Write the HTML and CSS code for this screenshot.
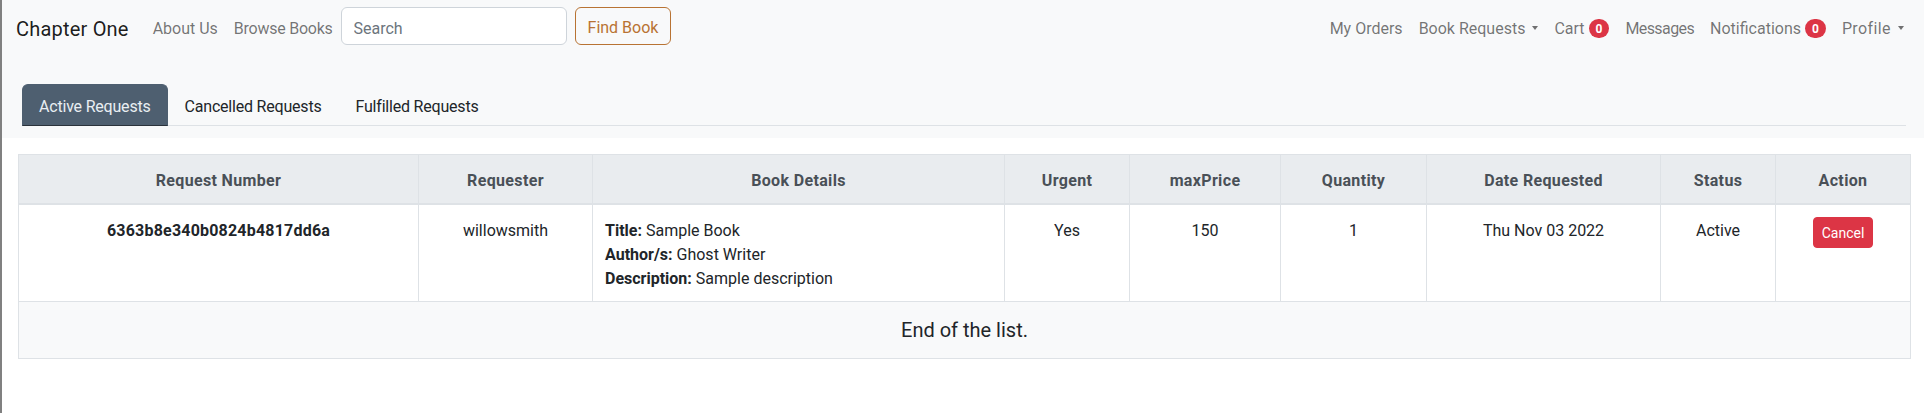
FILE: index.html
```html
<!DOCTYPE html>
<html lang="en">
<head>
<meta charset="utf-8">
<title>Chapter One - Book Requests</title>
<link rel="stylesheet" href="styles.css">
</head>
<body>
<div class="top">
  <nav class="navbar">
    <a class="brand" href="#">Chapter One</a>
    <ul class="nav-list">
      <li><a class="nav-link" href="#">About Us</a></li>
      <li><a class="nav-link tight" href="#">Browse Books</a></li>
    </ul>
    <form class="search">
      <input class="search-input" type="search" placeholder="Search">
      <button class="btn-find" type="button">Find Book</button>
    </form>
    <ul class="nav-list nav-right">
      <li><a class="nav-link" href="#">My Orders</a></li>
      <li><a class="nav-link caret" href="#">Book Requests</a></li>
      <li><a class="nav-link" href="#">Cart <span class="badge">0</span></a></li>
      <li><a class="nav-link narrow" href="#">Messages</a></li>
      <li><a class="nav-link" href="#">Notifications <span class="badge">0</span></a></li>
      <li><a class="nav-link caret wide" href="#">Profile</a></li>
    </ul>
  </nav>
  <div class="tabs-wrap">
    <ul class="tabs">
      <li><a class="tab active" href="#">Active Requests</a></li>
      <li><a class="tab" href="#">Cancelled Requests</a></li>
      <li><a class="tab" href="#">Fulfilled Requests</a></li>
    </ul>
  </div>
</div>
<div class="table-wrap">
  <table class="req-table">
    <colgroup>
      <col class="c1"><col class="c2"><col class="c3"><col class="c4"><col class="c5"><col class="c6"><col class="c7"><col class="c8"><col class="c9">
    </colgroup>
    <thead>
      <tr>
        <th>Request Number</th>
        <th>Requester</th>
        <th>Book Details</th>
        <th>Urgent</th>
        <th>maxPrice</th>
        <th>Quantity</th>
        <th>Date Requested</th>
        <th>Status</th>
        <th>Action</th>
      </tr>
    </thead>
    <tbody>
      <tr>
        <td class="req-num">6363b8e340b0824b4817dd6a</td>
        <td>willowsmith</td>
        <td class="details">
          <div><b>Title:</b> Sample Book</div>
          <div><b>Author/s:</b> Ghost Writer</div>
          <div><b>Description:</b> Sample description</div>
        </td>
        <td>Yes</td>
        <td>150</td>
        <td>1</td>
        <td>Thu Nov 03 2022</td>
        <td>Active</td>
        <td class="action"><button class="btn-cancel" type="button">Cancel</button></td>
      </tr>
      <tr>
        <td class="end" colspan="9">End of the list.</td>
      </tr>
    </tbody>
  </table>
</div>
</body>
</html>
```

FILE: styles.css
```css
html, body {
  height: 100%;
}
body {
  margin: 0;
  box-sizing: border-box;
  min-height: 100vh;
  border-left: 2px solid #808080;
  font-family: Roboto, "Liberation Sans", Arial, sans-serif;
  font-size: 16px;
  line-height: 1.5;
  color: #212529;
  background: #fff;
}
a {
  text-decoration: none;
}
ul {
  list-style: none;
  margin: 0;
  padding: 0;
}

.top {
  background: #f8f9fa;
}

.navbar {
  display: flex;
  align-items: center;
  padding: 6px 12px 8px 14px;
}
.brand {
  font-size: 20px;
  line-height: 30px;
  padding: 8px 0 2px;
  margin-right: 16px;
  letter-spacing: 0.2px;
  color: rgba(0, 0, 0, 0.9);
}
.nav-list {
  display: flex;
  align-items: center;
}
.nav-right {
  margin-left: auto;
}
.nav-link {
  display: block;
  padding: 11px 8px 5px;
  color: rgba(0, 0, 0, 0.55);
  white-space: nowrap;
}
.nav-link.tight {
  letter-spacing: -0.25px;
}
.nav-link.narrow {
  letter-spacing: -0.6px;
}
.nav-link.wide {
  letter-spacing: 0.4px;
}
.caret::after {
  content: "";
  display: inline-block;
  margin-left: 7px;
  vertical-align: 4px;
  border-top: 4px solid;
  border-right: 3.5px solid transparent;
  border-left: 3.5px solid transparent;
}
.badge {
  display: inline-block;
  padding: 4px 7px 3px;
  font-size: 12px;
  font-weight: 700;
  line-height: 1;
  color: #fff;
  background: #dc3545;
  border-radius: 50rem;
  vertical-align: 1px;
}

.search {
  display: flex;
  align-items: center;
}
.search-input {
  box-sizing: border-box;
  width: 226px;
  height: 38px;
  margin-right: 8px;
  padding: 8px 12px 4px;
  font: inherit;
  color: #212529;
  background: #fff;
  border: 1px solid #ced4da;
  border-radius: 6px;
}
.search-input::placeholder {
  color: #6c757d;
}
.btn-find {
  box-sizing: border-box;
  height: 38px;
  padding: 8px 12px 4px;
  font: inherit;
  color: #b87333;
  background: transparent;
  border: 1px solid #b87333;
  border-radius: 6px;
}

.tabs-wrap {
  padding: 30px 18px 12px 20px;
}
.tabs {
  display: flex;
  border-bottom: 1px solid #dee2e6;
}
.tab {
  display: block;
  margin-bottom: -1px;
  padding: 10px 16px 6px;
  letter-spacing: -0.2px;
  color: #212529;
  border: 1px solid transparent;
  border-top-left-radius: 6px;
  border-top-right-radius: 6px;
}
.tab.active {
  color: #e9eef2;
  background: #4e5f70;
  border-color: #4e5f70 #4e5f70 #2a323b;
}

.table-wrap {
  padding: 16px 14px 0 16px;
}
.req-table {
  width: 1892px;
  table-layout: fixed;
  border-collapse: collapse;
}
.c1 { width: 400px; }
.c2 { width: 174px; }
.c3 { width: 412px; }
.c4 { width: 125px; }
.c5 { width: 151px; }
.c6 { width: 146px; }
.c7 { width: 234px; }
.c8 { width: 115px; }
.c9 { width: 135px; }

.req-table th,
.req-table td {
  padding: 14px 12px 10px;
  border: 1px solid #dee2e6;
  text-align: center;
  vertical-align: top;
}
.req-table th {
  color: #495057;
  background: #e9ecef;
  font-weight: 700;
  letter-spacing: 0.35px;
  border-bottom-width: 2px;
}
.req-table td.req-num {
  font-weight: 700;
  letter-spacing: 0.2px;
}
.req-table td.details {
  text-align: left;
}
.details b {
  font-weight: 700;
}
.req-table td.action {
  padding: 12px;
}
.btn-cancel {
  padding: 5px 8px 3px;
  font: inherit;
  font-size: 14px;
  line-height: 1.5;
  color: #fff;
  background: #dc3545;
  border: 1px solid #dc3545;
  border-radius: 4px;
}
.req-table td.end {
  padding: 16px 12px 16px;
  font-size: 20px;
  line-height: 24px;
  background: #f8f9fa;
}
```
